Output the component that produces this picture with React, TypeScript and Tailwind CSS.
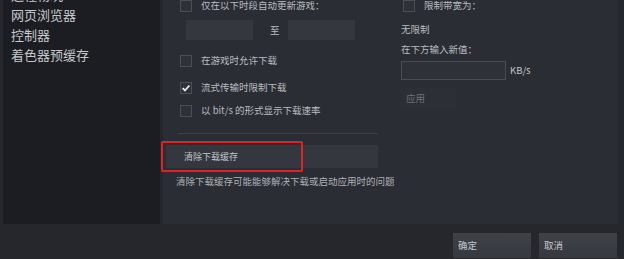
const cjk = { fontFamily: '"Noto Sans CJK SC", "Noto Sans", sans-serif' };

function Checkbox({ checked, label }: { checked?: boolean; label: string }) {
  return (
    <div className="flex h-[12px] items-center">
      <div className="ml-[2px] flex h-[12px] w-[12px] items-center justify-center border border-[#4b4e55] bg-[#2e3137]">
        {checked && (
          <svg viewBox="0 0 12 12" className="h-[10px] w-[10px]">
            <path d="M2 6.2 L4.8 9 L10 3" fill="none" stroke="#e8eaec" strokeWidth="2.2" />
          </svg>
        )}
      </div>
      <span className="ml-[9px] whitespace-nowrap text-[9.5px] leading-none text-[#b9bcc1]">{label}</span>
    </div>
  );
}

export default function App() {
  return (
    <div className="relative flex h-[259px] w-[624px] flex-col overflow-hidden bg-[#25272c]" style={cjk}>
      <div className="flex h-[224px]">
        {/* sidebar */}
        <div className="ml-[3px] h-full w-[157px] overflow-hidden bg-[#1b1d22] pl-[8px]">
          <div className="-mt-[15px] flex flex-col text-[13px] leading-[20px] text-[#c4c7cb]">
            <span>远程畅玩</span>
            <span>网页浏览器</span>
            <span>控制器</span>
            <span>着色器预缓存</span>
          </div>
        </div>

        {/* panel */}
        <div className="ml-[3px] flex h-full w-[455px] overflow-hidden bg-[#2a2d33]">
          <div className="flex w-[237px] shrink-0 flex-col pl-[15px]">
            <Checkbox label="仅在以下时段自动更新游戏：" />
            <div className="mt-[8px] flex h-[20px] items-center pl-[8px]">
              <div className="h-[20px] w-[67px] bg-[#34373e]" />
              <span className="ml-[17px] text-[9.5px] text-[#b9bcc1]">至</span>
              <div className="ml-[8px] h-[20px] w-[67px] bg-[#34373e]" />
            </div>
            <div className="mt-[15px]">
              <Checkbox label="在游戏时允许下载" />
            </div>
            <div className="mt-[15px]">
              <Checkbox checked label="流式传输时限制下载" />
            </div>
            <div className="mt-[11px]">
              <Checkbox label="以 bit/s 的形式显示下载速率" />
            </div>
            <div className="mt-[16px] h-px w-[200px] bg-[#3c3f46]" />
            <div className="-ml-[12px] mt-[11px] flex h-[23px] w-[212px] items-center bg-[#34373e] pl-[18px] text-[9px] text-[#c2c5ca]">
              清除下载缓存
            </div>
            <div className="-ml-[2px] mt-[9px] whitespace-nowrap text-[9.5px] leading-none text-[#aeb2b8]">
              清除下载缓存可能能够解决下载或启动应用时的问题
            </div>
          </div>

          <div className="flex flex-col pl-[1px]">
            <Checkbox label="限制带宽为：" />
            <div className="mt-[13px] text-[9.5px] leading-none text-[#b9bcc1]">无限制</div>
            <div className="mt-[10px] text-[9.5px] leading-none text-[#b9bcc1]">在下方输入新值：</div>
            <div className="mt-[7px] flex items-center">
              <div className="h-[19px] w-[105px] border border-[#4a4d54] bg-[#2e3137]" />
              <span className="ml-[4px] text-[9.5px] text-[#c2c5ca]">KB/s</span>
            </div>
            <div className="mt-[7px] flex h-[22px] w-[55px] items-center bg-[#2c2f35] pl-[5px] text-[9.5px] text-[#6e7279]">
              应用
            </div>
          </div>
        </div>
      </div>

      {/* footer buttons */}
      <div className="mt-[9px] flex justify-end gap-[8px] pr-[7px]">
        <div className="flex h-[25px] w-[78px] items-center bg-gradient-to-b from-[#3e4148] to-[#363940] pl-[5px] text-[9.5px] text-[#c6c9cd]">
          确定
        </div>
        <div className="flex h-[25px] w-[78px] items-center bg-gradient-to-b from-[#3e4148] to-[#363940] pl-[5px] text-[9.5px] text-[#c6c9cd]">
          取消
        </div>
      </div>

      {/* annotation */}
      <div className="absolute left-[161px] top-[141px] h-[31px] w-[142px] rounded-[2px] border-2 border-[#dc2424]" />
    </div>
  );
}
